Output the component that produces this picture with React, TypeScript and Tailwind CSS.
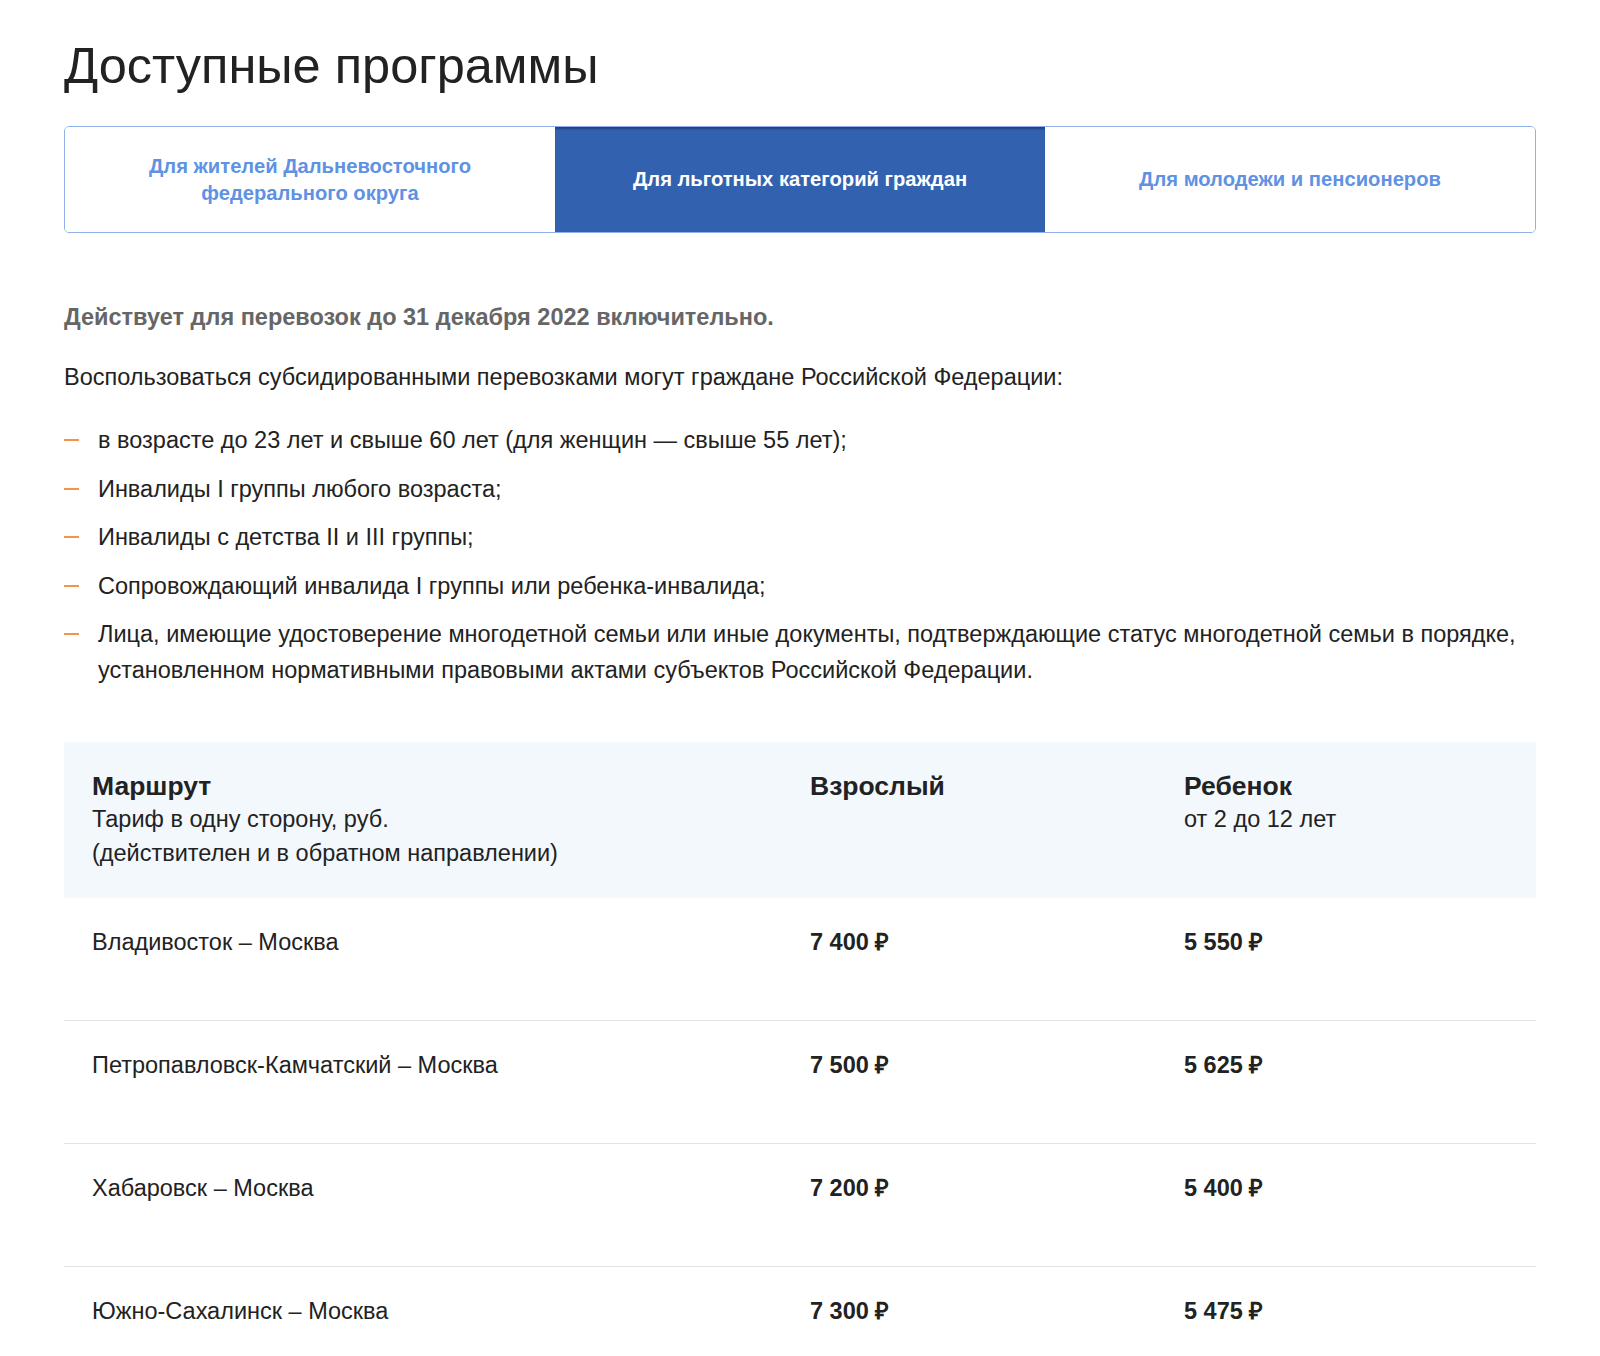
const tabs = [
  { label: "Для жителей Дальневосточного федерального округа", active: false },
  { label: "Для льготных категорий граждан", active: true },
  { label: "Для молодежи и пенсионеров", active: false },
];

const people = [
  "в возрасте до 23 лет и свыше 60 лет (для женщин — свыше 55 лет);",
  "Инвалиды I группы любого возраста;",
  "Инвалиды с детства II и III группы;",
  "Сопровождающий инвалида I группы или ребенка-инвалида;",
  "Лица, имеющие удостоверение многодетной семьи или иные документы, подтверждающие статус многодетной семьи в порядке, установленном нормативными правовыми актами субъектов Российской Федерации.",
];

const routes = [
  { route: "Владивосток – Москва", adult: "7 400 ₽", child: "5 550 ₽" },
  { route: "Петропавловск-Камчатский – Москва", adult: "7 500 ₽", child: "5 625 ₽" },
  { route: "Хабаровск – Москва", adult: "7 200 ₽", child: "5 400 ₽" },
  { route: "Южно-Сахалинск – Москва", adult: "7 300 ₽", child: "5 475 ₽" },
];

export default function App() {
  return (
    <div className="min-h-[1356px] bg-white px-16 pt-[36px] font-['Liberation_Sans',Arial,sans-serif] text-[#222]">
      <h1 className="text-[50.5px] leading-[60px] font-normal text-[#222]">Доступные программы</h1>

      <div className="mt-[30px] flex h-[107px] overflow-hidden rounded-[5px] border border-[#8fb1ea]">
        {tabs.map((t) => (
          <button
            key={t.label}
            type="button"
            className={
              t.active
                ? "flex flex-1 items-center justify-center bg-[#3262af] px-12 text-center text-[20.2px] leading-[26.5px] font-bold text-white shadow-[inset_0_3px_2px_-1px_rgba(20,40,90,0.6)]"
                : "flex flex-1 items-center justify-center bg-white px-12 text-center text-[20.2px] leading-[26.5px] font-bold text-[#5f92e3]"
            }
          >
            {t.label}
          </button>
        ))}
      </div>

      <p className="mt-[68px] text-[23.5px] leading-[32px] font-bold text-[#666]">
        Действует для перевозок до 31 декабря 2022 включительно.
      </p>
      <p className="mt-[28px] text-[23.5px] leading-[32px] text-[#222]">
        Воспользоваться субсидированными перевозками могут граждане Российской Федерации:
      </p>

      <ul className="mt-[29px] flex flex-col gap-[12.5px]">
        {people.map((text) => (
          <li key={text} className="flex text-[23.5px] leading-[36px] text-[#222]">
            <span className="mt-[17px] mr-[19px] h-[2px] w-[15px] shrink-0 bg-[#f39549]" />
            <span>{text}</span>
          </li>
        ))}
      </ul>

      <div className="mt-[54px]">
        <div className="grid grid-cols-[718px_374px_1fr] bg-[#f3f8fd] pt-[28px] pb-[28px] text-[23.5px] leading-[34px]">
          <div className="px-7">
            <div className="text-[26.5px] leading-[32px] font-bold">Маршрут</div>
            <div>Тариф в одну сторону, руб.</div>
            <div>(действителен и в обратном направлении)</div>
          </div>
          <div className="px-7">
            <div className="text-[26.5px] leading-[32px] font-bold">Взрослый</div>
          </div>
          <div className="px-7">
            <div className="text-[26.5px] leading-[32px] font-bold">Ребенок</div>
            <div>от 2 до 12 лет</div>
          </div>
        </div>

        {routes.map((r, i) => (
          <div
            key={r.route}
            className={
              i < routes.length - 1
                ? "grid h-[123px] grid-cols-[718px_374px_1fr] border-b border-[#e3e3e3] pt-[28px] text-[23.5px] leading-[32px]"
                : "grid h-[123px] grid-cols-[718px_374px_1fr] pt-[28px] text-[23.5px] leading-[32px]"
            }
          >
            <div className="px-7 text-[#222]">{r.route}</div>
            <div className="px-7 font-bold text-[#222]">{r.adult}</div>
            <div className="px-7 font-bold text-[#222]">{r.child}</div>
          </div>
        ))}
      </div>
    </div>
  );
}
